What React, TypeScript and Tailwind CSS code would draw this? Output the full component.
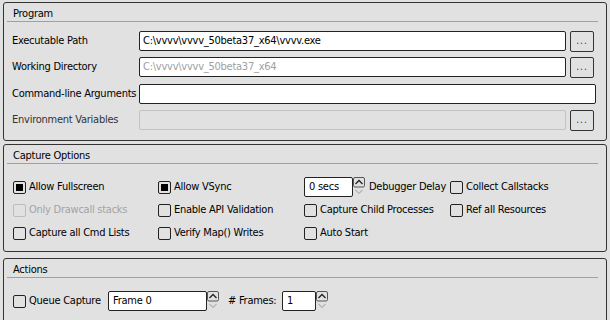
import React from 'react';

const font = { fontFamily: '"DejaVu Sans", Tahoma, sans-serif' };

function Panel({ title, className, children }: { title: string; className?: string; children: React.ReactNode }) {
  return (
    <div className={`shrink-0 border border-[#333333] rounded-[3px] ${className ?? ''}`}>
      <div className="ml-[3px] mr-[8px] h-[19px] border-b border-[#a0a0a0] pl-[6px] leading-[22px] text-black">
        {title}
      </div>
      {children}
    </div>
  );
}

function BrowseButton() {
  return (
    <div className="w-[24px] h-[21px] border border-[#333333] rounded-[2px] bg-[#e1e1e1] flex items-center justify-center text-[10px] leading-none tracking-[1px] text-[#333333]">
      ...
    </div>
  );
}

function Check({ checked, disabled, label }: { checked?: boolean; disabled?: boolean; label: string }) {
  return (
    <div className="flex items-center h-[20px]">
      <div
        className={`w-[13px] h-[13px] rounded-[2px] border bg-[#e1e1e1] p-[2px] shrink-0 ${
          disabled ? 'border-[#bcbcbc]' : 'border-[#222222]'
        }`}
      >
        {checked && <div className="w-full h-full bg-black" />}
      </div>
      <span className={`ml-[3px] ${disabled ? 'text-[#a3a3a3]' : 'text-black'}`}>{label}</span>
    </div>
  );
}

function SpinArrows() {
  return (
    <svg width="12" height="20" viewBox="0 0 12 20" className="shrink-0">
      <rect x="0.5" y="0.5" width="11" height="9.5" rx="1.5" fill="#e1e1e1" stroke="#555555" />
      <path d="M2.5 7 L6 3.5 L9.5 7" fill="none" stroke="#222222" strokeWidth="1.3" />
      <path d="M2.5 13 L6 16.5 L9.5 13" fill="none" stroke="#b5b5b5" strokeWidth="1.2" />
    </svg>
  );
}

function SpinBox({ value, width }: { value: string; width: string }) {
  return (
    <div className="flex items-center">
      <div className={`${width} h-[20px] bg-white border border-[#222222] rounded-[2px] pl-[4px] leading-[18px] text-black`}>
        {value}
      </div>
      <SpinArrows />
    </div>
  );
}

export default function App() {
  return (
    <div
      className="w-[610px] h-[320px] overflow-hidden bg-[#e1e1e1] pl-[3px] pr-[3px] pt-[2px] flex flex-col text-[11px] font-stretch-condensed tracking-[-0.25px] whitespace-nowrap"
      style={font}
    >
      {/* Program */}
      <Panel title="Program" className="h-[139px]">
        <div className="pl-[8px] pr-[10px] pt-[9px] flex flex-col gap-[6px]">
          <div className="flex items-center h-[20px]">
            <span className="w-[127px] shrink-0">Executable Path</span>
            <div className="flex-1 h-[20px] bg-white border border-[#222222] rounded-[2px] pl-[3px] leading-[18px]">
              C:\vvvv\vvvv_50beta37_x64\vvvv.exe
            </div>
            <div className="ml-[4px] mr-[2px]"><BrowseButton /></div>
          </div>
          <div className="flex items-center h-[20px]">
            <span className="w-[127px] shrink-0">Working Directory</span>
            <div className="flex-1 h-[20px] bg-white border border-[#222222] rounded-[2px] pl-[3px] leading-[18px] text-[#a0a0a0]">
              C:\vvvv\vvvv_50beta37_x64
            </div>
            <div className="ml-[4px] mr-[2px]"><BrowseButton /></div>
          </div>
          <div className="flex items-center h-[20px] mt-[1px]">
            <span className="w-[127px] shrink-0">Command-line Arguments</span>
            <div className="flex-1 h-[20px] bg-white border border-[#222222] rounded-[2px]" />
          </div>
          <div className="flex items-center h-[20px]">
            <span className="w-[127px] shrink-0 text-[#333333]">Environment Variables</span>
            <div className="flex-1 h-[20px] bg-[#e1e1e1] border border-[#c3c3c3] rounded-[2px]" />
            <div className="ml-[4px] mr-[2px]"><BrowseButton /></div>
          </div>
        </div>
      </Panel>

      {/* Capture Options */}
      <Panel title="Capture Options" className="h-[108px] mt-[3px]">
        <div className="pl-[9px] pt-[13px] grid grid-cols-[145px_146px_146px_1fr] gap-y-[3px]">
          <Check checked label="Allow Fullscreen" />
          <Check checked label="Allow VSync" />
          <div className="flex items-center h-[20px]">
            <SpinBox value="0 secs" width="w-[49px]" />
            <span className="ml-[4px]">Debugger Delay</span>
          </div>
          <Check label="Collect Callstacks" />

          <Check disabled label="Only Drawcall stacks" />
          <Check label="Enable API Validation" />
          <Check label="Capture Child Processes" />
          <Check label="Ref all Resources" />

          <Check label="Capture all Cmd Lists" />
          <Check label="Verify Map() Writes" />
          <Check label="Auto Start" />
        </div>
      </Panel>

      {/* Actions */}
      <Panel title="Actions" className="h-[80px] mt-[6px]">
        <div className="pl-[9px] pt-[13px] flex items-center">
          <div className="w-[95px] shrink-0">
            <Check label="Queue Capture" />
          </div>
          <SpinBox value="Frame 0" width="w-[99px]" />
          <span className="ml-[9px] w-[54px] shrink-0"># Frames:</span>
          <SpinBox value="1" width="w-[34px]" />
        </div>
      </Panel>
    </div>
  );
}
